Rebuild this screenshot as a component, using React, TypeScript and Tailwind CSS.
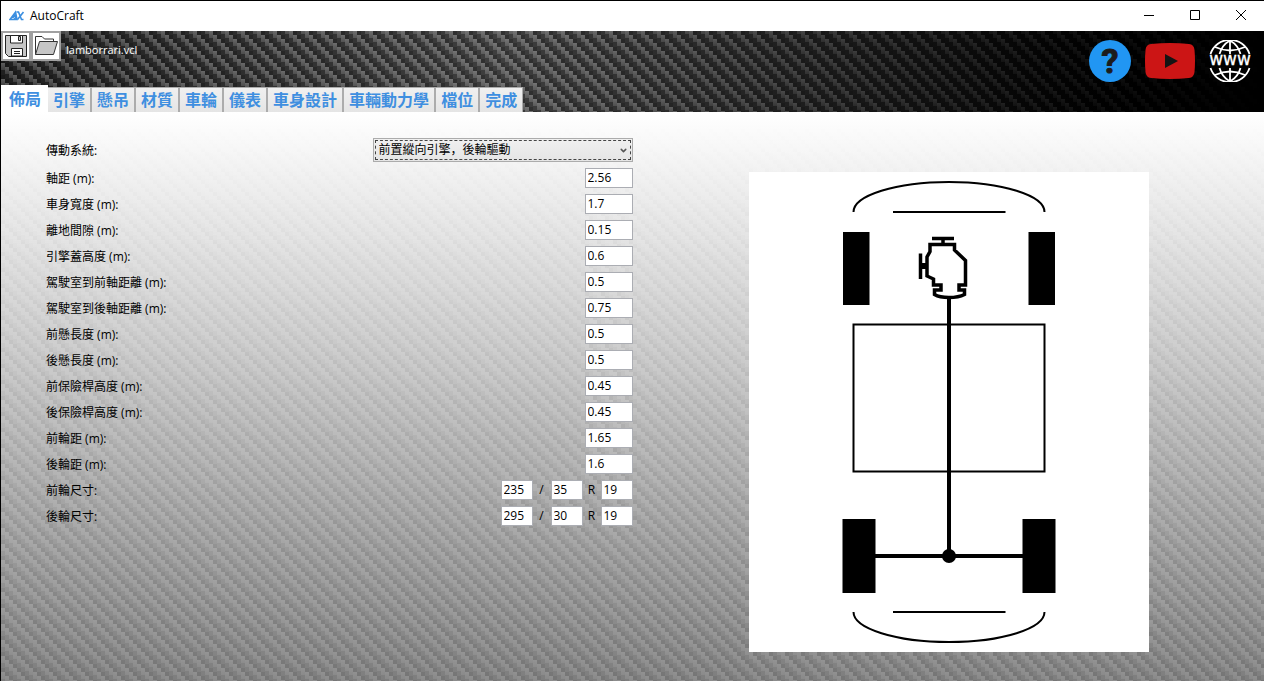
import { useId, useState } from 'react';
import type { ReactNode } from 'react';
import { ChevronDown } from 'lucide-react';

const tabs = ['佈局', '引擎', '懸吊', '材質', '車輪', '儀表', '車身設計', '車輛動力學', '檔位', '完成'];

const drivetrains = ['前置縱向引擎，後輪驅動', '前置橫向引擎，前輪驅動', '中置引擎，後輪驅動', '後置引擎，後輪驅動'];

const dimensions = [
  { id: 'wheelbase', label: '軸距 (m):', value: '2.56' },
  { id: 'body-width', label: '車身寬度 (m):', value: '1.7' },
  { id: 'clearance', label: '離地間隙 (m):', value: '0.15' },
  { id: 'hood-height', label: '引擎蓋高度 (m):', value: '0.6' },
  { id: 'cabin-front', label: '駕駛室到前軸距離 (m):', value: '0.5' },
  { id: 'cabin-rear', label: '駕駛室到後軸距離 (m):', value: '0.75' },
  { id: 'front-overhang', label: '前懸長度 (m):', value: '0.5' },
  { id: 'rear-overhang', label: '後懸長度 (m):', value: '0.5' },
  { id: 'front-bumper', label: '前保險桿高度 (m):', value: '0.45' },
  { id: 'rear-bumper', label: '後保險桿高度 (m):', value: '0.45' },
  { id: 'front-track', label: '前輪距 (m):', value: '1.65' },
  { id: 'rear-track', label: '後輪距 (m):', value: '1.6' },
];

const tires = [
  { id: 'front-tire', label: '前輪尺寸:', values: ['235', '35', '19'] },
  { id: 'rear-tire', label: '後輪尺寸:', values: ['295', '30', '19'] },
];

// Carbon fibre twill: four columns, each one shifted down by a step
const CarbonTexture = ({ className }: { className: string }) => {
  const id = useId();
  return (
    <svg className={`absolute inset-0 h-full w-full ${className}`} aria-hidden="true">
      <defs>
        <linearGradient id={`${id}-l`} x1="0" y1="0" x2="0" y2="1">
          <stop offset="0" stopColor="#fff" stopOpacity="0.26" />
          <stop offset="1" stopColor="#fff" stopOpacity="0.12" />
        </linearGradient>
        <pattern id={id} width="16" height="16" patternUnits="userSpaceOnUse">
          {[0, 1, 2, 3].map((col) => (
            <g key={col}>
              {[-16, 0].map((offset) => (
                <g key={offset} transform={`translate(${col * 4} ${col * 4 + offset})`}>
                  <rect width="4" height="7" fill={`url(#${id}-l)`} />
                  <rect y="7" width="4" height="5" fill="#000" fillOpacity="0.12" />
                  <rect y="12" width="4" height="4" fill="#000" fillOpacity="0.3" />
                </g>
              ))}
            </g>
          ))}
        </pattern>
      </defs>
      <rect width="100%" height="100%" fill={`url(#${id})`} />
    </svg>
  );
};

const Logo = () => (
  <svg className="h-3 w-4" viewBox="0 0 16 12" fill="none" stroke="#3b8ee0" strokeWidth="1.6" aria-hidden="true">
    <path d="M1 9.5 6.5 2.2 8 9.5zM3.5 8l3-3M5.5 9 7.5 6.5" />
    <path d="M7.5 2h2l3 7.5h2M14.5 2 8.5 9.5" />
  </svg>
);

const SaveIcon = () => (
  <svg className="h-6 w-6" viewBox="0 0 24 24" fill="none" stroke="#222" aria-hidden="true">
    <path d="M1.5 1.5h21v21H4.5l-3-3z" fill="#c6c6c6" />
    <path d="M6.5 1.5v7.5h12V1.5z" fill="#fff" />
    <path d="M14.5 2.5h2v4h-2z" fill="#c6c6c6" />
    <path d="M7.5 22v-7.5h11V22z" fill="#fff" />
    <path d="M10 17.5h6M10 19.5h6" />
  </svg>
);

const OpenIcon = () => (
  <svg className="h-6 w-6" viewBox="0 0 24 24" fill="none" stroke="#333" aria-hidden="true">
    <path d="M1.5 20.5V2.5h6.5l2.5 2.5h9v3" fill="#fff" />
    <path d="M5.5 7.5h18L19.5 20.5h-18z" fill="#c6c6c6" />
  </svg>
);

const HelpIcon = () => (
  <svg className="h-[42px] w-[42px]" viewBox="0 0 42 42" aria-hidden="true">
    <circle cx="21" cy="21" r="21" fill="#2196f3" />
    <text x="21" y="33" fontSize="34" textAnchor="middle" fill="#1c1c1c" stroke="#1c1c1c" className="font-['Roboto',sans-serif] font-bold">?</text>
  </svg>
);

const VideoIcon = () => (
  <svg className="h-9 w-[50px]" viewBox="0 0 50 36" aria-hidden="true">
    <path d="M6 1Q25-1 44 1q5 .5 5.5 6Q50.5 18 49.5 29q-.5 5.5-5.5 6Q25 37 6 35 1 34.5.5 29-.5 18 .5 7 1 1.500 6 1z" fill="#cc1515" />
    <path d="M20 11v14l13-7z" fill="#141414" />
  </svg>
);

const WebIcon = () => (
  <svg className="h-[42px] w-[42px]" viewBox="0 0 42 42" fill="none" stroke="#fff" strokeWidth="1.8" aria-hidden="true">
    <path d="M1.500 14A20.500 20.500 0 0 1 40.500 14M1.500 28A20.500 20.500 0 0 0 40.500 28" />
    <path d="M21 .5V14M21 28v13.500M10.500 14Q13 5 21 .5 29 5 31.500 14M10.500 28Q13 37 21 41.500 29 37 31.500 28" />
    <path d="M6 7q15 7 30 0M6 35q15-7 30 0" />
    <text x="21" y="25" fontSize="17" textAnchor="middle" fill="#fff" strokeWidth="0.3" className="font-['DejaVu_Sans',sans-serif]">www</text>
  </svg>
);

const ChassisDiagram = () => (
  <svg className="block w-full" viewBox="0 0 400 480" fill="none" stroke="#000" role="img" aria-label="底盤佈局">
    <g strokeWidth="2">
      <path d="M104.5 40A95.5 30 0 0 1 295.5 40M144 40h112.5" />
      <path d="M104.5 440A95.5 30 0 0 0 295.5 440M144 440h112.5" />
      <rect x="104.5" y="152.5" width="191" height="147" />
    </g>
    <g fill="#000" stroke="none">
      <rect x="94" y="60" width="26.5" height="73" />
      <rect x="279.5" y="60" width="26.5" height="73" />
      <rect x="93.5" y="347" width="33" height="74" />
      <rect x="273.5" y="347" width="33" height="74" />
      <circle cx="200" cy="384" r="7" />
    </g>
    <path d="M200 126v258M126 384h148" strokeWidth="4" />
    <g strokeWidth="3.5">
      <path d="M181 72.5h24.5V78l11 10.5V113H210v5h5.5v4.5q-6 3-15.5 3t-14.5-3V118h6.500v-5h-7.500v-6L178 104V85l3-5.500z" />
      <path d="M183 66.5h22M194 66v6M171.5 81.5V107" />
      <path d="M172 94h6" strokeWidth="6" />
    </g>
  </svg>
);

const TextBox = ({ id, value, className, label }: { id: string; value: string; className: string; label?: string }) => (
  <input
    id={id}
    type="text"
    aria-label={label}
    defaultValue={value}
    className={`h-5 border border-[#abadb3] bg-white px-[2px] pb-[2px] text-black outline-none ${className}`}
  />
);

const Row = ({ id, label, children }: { id: string; label: string; children: ReactNode }) => (
  <div className="flex items-center justify-between">
    <label htmlFor={id} className="pt-[2px]">{label}</label>
    {children}
  </div>
);

const App = () => {
  const [activeTab, setActiveTab] = useState(0);

  return (
    <div className="flex min-h-screen flex-col border-t border-l border-black bg-white font-['Open_Sans','Noto_Sans_CJK_TC',sans-serif] text-xs text-black">
      <div className="flex h-[30px] items-center justify-between pl-2">
        <div className="flex items-center gap-[5px]">
          <Logo />
          <span>AutoCraft</span>
        </div>
        <div className="flex">
          <button type="button" aria-label="最小化" className="flex h-7 w-[46px] items-center justify-center">
            <svg width="12" height="12" viewBox="0 0 12 12" stroke="currentColor"><path d="M1 5.5h10" /></svg>
          </button>
          <button type="button" aria-label="最大化" className="flex h-7 w-[46px] items-center justify-center">
            <svg width="12" height="12" viewBox="0 0 12 12" fill="none" stroke="currentColor"><path d="M1.5.5h9v9h-9z" /></svg>
          </button>
          <button type="button" aria-label="關閉" className="flex h-7 w-[46px] items-center justify-center">
            <svg width="12" height="12" viewBox="0 0 12 12" stroke="currentColor"><path d="M1 0l10 10M11 0 1 10" /></svg>
          </button>
        </div>
      </div>

      <header className="relative flex h-[81px] justify-between bg-linear-to-r from-[#242424] via-[#484848] via-40% to-black">
        <CarbonTexture className="mask-r-from-45%" />
        <div className="relative flex flex-col justify-between">
          <div className="flex items-center">
            <div className="flex">
              <button type="button" aria-label="儲存" className="flex h-[30px] w-[30px] items-center justify-center border-2 border-[#a0a0a0] bg-white">
                <SaveIcon />
              </button>
              <button type="button" aria-label="開啟" className="flex h-[30px] w-[30px] items-center justify-center border-2 border-[#a0a0a0] bg-white">
                <OpenIcon />
              </button>
            </div>
            <span className="pt-2 pl-[5px] text-[11px] text-white">lamborrari.vcl</span>
          </div>
          <div role="tablist" className="flex items-end text-base font-bold text-[#3f8fe0]">
            {tabs.map((tab, index) => (
              <button
                key={tab}
                type="button"
                role="tab"
                aria-selected={index === activeTab}
                onClick={() => setActiveTab(index)}
                className={
                  index === activeTab
                    ? 'h-[27px] bg-white pr-[7px] pl-2 leading-[29px]'
                    : 'h-[25px] border-t border-r-2 border-[#acacac] bg-linear-to-b from-[#f0f0f0] to-[#e5e5e5] px-[5px] leading-6 last:border-r'
                }
              >
                {tab}
              </button>
            ))}
          </div>
        </div>
        <nav className="relative flex h-[60px] items-center gap-[14px] pr-[13px]">
          <a href="#help" aria-label="說明"><HelpIcon /></a>
          <a href="#video" aria-label="影片"><VideoIcon /></a>
          <a href="#web" aria-label="網站"><WebIcon /></a>
        </nav>
      </header>

      <main className="relative grid flex-1 grid-cols-2 bg-linear-to-b from-white via-[#c8c8c8] via-45% to-[#848484]">
        <CarbonTexture className="mask-t-from-10% opacity-35" />
        <form className="relative flex flex-col gap-[6px] pt-[26px] pl-[45px]">
          <Row id="drivetrain" label="傳動系統:">
            <div className="relative w-[260px]">
              <select
                id="drivetrain"
                className="block h-6 w-full appearance-none border border-[#acacac] bg-linear-to-b from-[#f0f0f0] to-[#e5e5e5] pl-[5px] font-['Open_Sans','Noto_Sans_CJK_SC',sans-serif] outline-1 -outline-offset-3 outline-dashed outline-[#444]"
              >
                {drivetrains.map((name) => (
                  <option key={name}>{name}</option>
                ))}
              </select>
              <ChevronDown size={9} strokeWidth={4} className="pointer-events-none absolute top-2 right-[5px] text-[#555]" />
            </div>
          </Row>
          {dimensions.map((item) => (
            <Row key={item.id} id={item.id} label={item.label}>
              <TextBox id={item.id} value={item.value} className="w-12" />
            </Row>
          ))}
          {tires.map((tire) => (
            <Row key={tire.id} id={tire.id} label={tire.label}>
              <div className="flex items-center">
                <TextBox id={tire.id} value={tire.values[0]} className="w-8" />
                <span className="w-[18px] text-center">/</span>
                <TextBox id={`${tire.id}-ratio`} label="扁平比" value={tire.values[1]} className="w-8" />
                <span className="w-[18px] text-center">R</span>
                <TextBox id={`${tire.id}-rim`} label="輪圈" value={tire.values[2]} className="w-8" />
              </div>
            </Row>
          ))}
        </form>
        <div className="relative flex items-start justify-center pt-[60px] pb-7 pl-[2px]">
          <div className="w-full max-w-[400px] bg-white">
            <ChassisDiagram />
          </div>
        </div>
      </main>
    </div>
  );
};

export default App;
